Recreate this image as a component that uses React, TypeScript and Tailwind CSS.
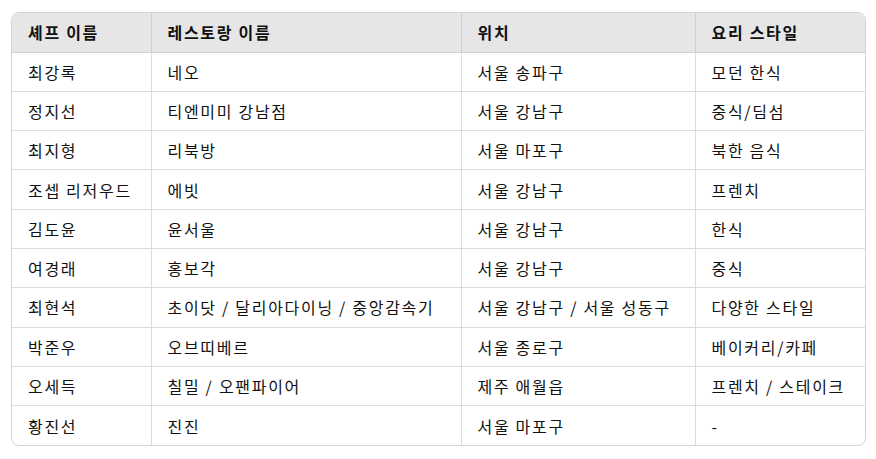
const ROWS: [string, string, string, string][] = [
  ['최강록', '네오', '서울 송파구', '모던 한식'],
  ['정지선', '티엔미미 강남점', '서울 강남구', '중식/딤섬'],
  ['최지형', '리북방', '서울 마포구', '북한 음식'],
  ['조셉 리저우드', '에빗', '서울 강남구', '프렌치'],
  ['김도윤', '윤서울', '서울 강남구', '한식'],
  ['여경래', '홍보각', '서울 강남구', '중식'],
  ['최현석', '초이닷 / 달리아다이닝 / 중앙감속기', '서울 강남구 / 서울 성동구', '다양한 스타일'],
  ['박준우', '오브띠베르', '서울 종로구', '베이커리/카페'],
  ['오세득', '칠밀 / 오팬파이어', '제주 애월읍', '프렌치 / 스테이크'],
  ['황진선', '진진', '서울 마포구', '-'],
];

const HEAD = ['셰프 이름', '레스토랑 이름', '위치', '요리 스타일'];
const WIDTHS = ['w-[139px]', 'w-[310px]', 'w-[234px]', 'w-[170px]'];

export default function App() {
  return (
    <div className="bg-white w-[876px] h-[459px] pt-[12px] pl-[11px] font-['Noto_Sans_CJK_KR','Noto_Sans',sans-serif] text-[16px] tracking-[1.7px] text-[#111]">
      <div className="w-[855px] border border-[#d4d4d4] rounded-lg overflow-hidden">
        <table className="w-full border-collapse table-fixed">
          <thead>
            <tr className="bg-[#e6e6e6] h-[39px]">
              {HEAD.map((h, i) => (
                <th
                  key={h}
                  className={`${WIDTHS[i]} text-left font-semibold px-4 border-b border-[#cfcfcf] ${i > 0 ? 'border-l border-l-[#cfcfcf]' : ''}`}
                >
                  {h}
                </th>
              ))}
            </tr>
          </thead>
          <tbody>
            {ROWS.map((r, ri) => (
              <tr key={ri} className="h-[39.3px]">
                {r.map((c, i) => (
                  <td
                    key={i}
                    className={`px-4 whitespace-nowrap ${ri < ROWS.length - 1 ? 'border-b border-[#dcdcdc]' : ''} ${i > 0 ? 'border-l border-l-[#dcdcdc]' : ''}`}
                  >
                    {c}
                  </td>
                ))}
              </tr>
            ))}
          </tbody>
        </table>
      </div>
    </div>
  );
}
